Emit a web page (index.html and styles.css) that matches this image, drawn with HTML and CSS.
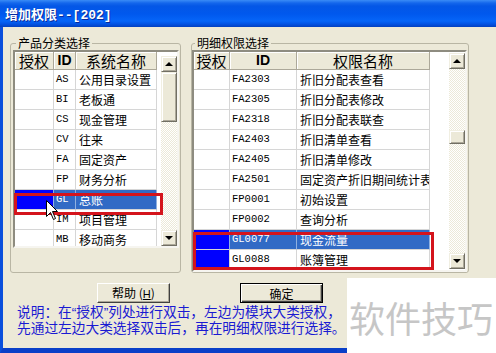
FILE: index.html
```html
<!DOCTYPE html>
<html lang="zh-CN">
<head>
    <meta charset="UTF-8">
    <title>增加权限</title>
    <link rel="stylesheet" href="styles.css">
</head>
<body>
    <div class="window">
        <div class="titlebar">增加权限<span class="title-num">--[202]</span></div>
        <div class="frame">
            <div class="groups">
                <fieldset class="group group-left">
                    <legend>产品分类选择</legend>
                    <div class="list list-left">
                        <div class="grid grid-left">
                            <div class="row head">
                                <div class="hd">授权</div>
                                <div class="hd hd-id">ID</div>
                                <div class="hd">系统名称</div>
                            </div>
                            <div class="row"><div class="cell"></div><div class="cell id">AS</div><div class="cell">公用目录设置</div></div>
                            <div class="row"><div class="cell"></div><div class="cell id">BI</div><div class="cell">老板通</div></div>
                            <div class="row"><div class="cell"></div><div class="cell id">CS</div><div class="cell">现金管理</div></div>
                            <div class="row"><div class="cell"></div><div class="cell id">CV</div><div class="cell">往来</div></div>
                            <div class="row"><div class="cell"></div><div class="cell id">FA</div><div class="cell">固定资产</div></div>
                            <div class="row"><div class="cell"></div><div class="cell id">FP</div><div class="cell">财务分析</div></div>
                            <div class="row sel"><div class="cell auth"></div><div class="cell id">GL</div><div class="cell">总账</div></div>
                            <div class="row"><div class="cell"></div><div class="cell id">IM</div><div class="cell">项目管理</div></div>
                            <div class="row"><div class="cell"></div><div class="cell id">MB</div><div class="cell">移动商务</div></div>
                        </div>
                        <div class="vscroll vscroll-left">
                            <div class="sb-btn"><span class="arrow-up"></span></div>
                            <div class="sb-track"><div class="sb-thumb thumb-left"></div></div>
                            <div class="sb-btn"><span class="arrow-down"></span></div>
                        </div>
                        <div class="mark mark-left"></div>
                        <svg class="cursor" width="13" height="21" viewBox="0 0 13 21">
                            <path d="M0.5 0.5 L0.5 16.5 L4.5 12.5 L7.5 19.5 L9.5 18.5 L6.5 11.5 L11.5 11.5 Z" fill="#fff" stroke="#000" stroke-width="1"/>
                        </svg>
                    </div>
                </fieldset>

                <fieldset class="group group-right">
                    <legend>明细权限选择</legend>
                    <div class="list list-right">
                        <div class="grid grid-right">
                            <div class="row head">
                                <div class="hd">授权</div>
                                <div class="hd hd-id">ID</div>
                                <div class="hd">权限名称</div>
                            </div>
                            <div class="row"><div class="cell"></div><div class="cell id">FA2303</div><div class="cell">折旧分配表查看</div></div>
                            <div class="row"><div class="cell"></div><div class="cell id">FA2305</div><div class="cell">折旧分配表修改</div></div>
                            <div class="row"><div class="cell"></div><div class="cell id">FA2318</div><div class="cell">折旧分配表联查</div></div>
                            <div class="row"><div class="cell"></div><div class="cell id">FA2403</div><div class="cell">折旧清单查看</div></div>
                            <div class="row"><div class="cell"></div><div class="cell id">FA2405</div><div class="cell">折旧清单修改</div></div>
                            <div class="row"><div class="cell"></div><div class="cell id">FA2501</div><div class="cell">固定资产折旧期间统计表</div></div>
                            <div class="row"><div class="cell"></div><div class="cell id">FP0001</div><div class="cell">初始设置</div></div>
                            <div class="row"><div class="cell"></div><div class="cell id">FP0002</div><div class="cell">查询分析</div></div>
                            <div class="row sel"><div class="cell auth"></div><div class="cell id">GL0077</div><div class="cell">现金流量</div></div>
                            <div class="row"><div class="cell auth"></div><div class="cell id">GL0088</div><div class="cell">账簿管理</div></div>
                        </div>
                        <div class="vscroll vscroll-right">
                            <div class="sb-btn"><span class="arrow-up"></span></div>
                            <div class="sb-track"><div class="sb-thumb thumb-right"></div></div>
                            <div class="sb-btn"><span class="arrow-down"></span></div>
                        </div>
                        <div class="mark mark-right"></div>
                    </div>
                </fieldset>
            </div>

            <div class="actions">
                <button class="btn btn-help">帮助 (<u>H</u>)</button>
                <button class="btn btn-ok">确定</button>
            </div>

            <p class="note">说明：在“授权”列处进行双击，左边为模块大类授权，<br>先通过左边大类选择双击后，再在明细权限进行选择。</p>
        </div>

        <div class="watermark">软件技巧</div>
    </div>
</body>
</html>
```

FILE: styles.css
```css
* {
    box-sizing: border-box;
}

body {
    margin: 0;
    width: 496px;
    height: 353px;
    overflow: hidden;
    background: #fff;
    font-family: "Noto Sans CJK SC", sans-serif;
    font-size: 12px;
    color: #000;
}

.window {
    position: relative;
    width: 496px;
    height: 353px;
}

.titlebar {
    height: 27px;
    padding-left: 5px;
    line-height: 27px;
    font-size: 13px;
    font-weight: bold;
    color: #fff;
    text-shadow: 1px 1px #0c2a9a;
    background: linear-gradient(to bottom, #3a8cf6 0, #1467ec 3px, #0457e6 6px, #0058ee 14px, #0565f8 21px, #0253e4 24px, #0340bf 27px);
}

.title-num {
    font-family: "Liberation Mono", monospace;
}

.frame {
    height: 326px;
    background: #ece9d8;
    border-left: 3px solid #0a4fdc;
    border-bottom: 5px solid #0a3fc8;
}

/* group boxes */
.groups {
    display: flex;
    align-items: flex-start;
    gap: 10px;
    padding: 9px 0 0 7px;
}

.group {
    margin: 0;
    min-width: 0;
    border: 1px solid #b9b6a4;
    border-radius: 3px;
}

.group-left {
    width: 171px;
    padding: 0 1px 24px 2px;
}

.group-right {
    width: 278px;
    padding: 0 1px 0 0;
}

.group legend {
    margin-left: 3px;
    padding: 0 2px;
    font-size: 12px;
    line-height: 14px;
}

/* list boxes */
.list {
    position: relative;
    display: flex;
    background: #fff;
    border: 2px solid;
    border-color: #8e8c80 #f6f5f0 #f6f5f0 #8e8c80;
}

.list-left {
    width: 166px;
    height: 198px;
}

.list-right {
    width: 275px;
    height: 222px;
}

.grid {
    overflow: hidden;
}

.grid-left {
    width: 142px;
}

.grid-right {
    width: 236px;
}

.row {
    display: grid;
    height: 20px;
}

.grid-left .row {
    grid-template-columns: 39px 22px 81px;
}

.grid-right .row {
    grid-template-columns: 36px 67px 133px;
}

.row.head {
    height: 18px;
}

.hd {
    background: #ece9d8;
    border-right: 1px solid #aca899;
    border-bottom: 1px solid #aca899;
    box-shadow: inset 1px 1px #fff;
    font-size: 15px;
    line-height: 17px;
    text-align: center;
    white-space: nowrap;
}

.hd-id {
    font-family: "Liberation Sans", sans-serif;
    font-size: 14px;
    font-weight: bold;
}

.cell {
    border-right: 1px solid #d6d6d6;
    border-bottom: 1px solid #d6d6d6;
    padding-left: 3px;
    line-height: 19px;
    white-space: nowrap;
    overflow: hidden;
}

.cell.id {
    font-family: "Liberation Mono", monospace;
    font-size: 10.5px;
    padding-left: 2px;
}

.cell.auth {
    background: #0000ff;
}

.row.sel .cell {
    background: #316ac5;
    color: #fff;
    border-right-color: #8fb0e0;
}

.row.sel .cell.auth {
    background: #0000ff;
}

/* scrollbars */
.vscroll {
    display: flex;
    flex-direction: column;
    width: 16px;
    margin-left: auto;
}

.vscroll-left {
    margin-top: 4px;
}

.vscroll-right {
    margin-top: 1px;
    margin-bottom: 1px;
}

.sb-btn,
.sb-thumb {
    position: relative;
    background: #ece9d8;
    border: 1px solid;
    border-color: #f1efe2 #716f64 #716f64 #f1efe2;
    box-shadow: inset 1px 1px #fff, inset -1px -1px #aca899;
}

.sb-btn {
    height: 16px;
    flex: none;
}

.sb-track {
    flex: 1;
    background: repeating-conic-gradient(#fff 0 25%, #ece9d8 0 50%) 0 0 / 2px 2px;
}

.thumb-left {
    height: 50px;
}

.thumb-right {
    margin-top: 61px;
    height: 14px;
}

.arrow-up,
.arrow-down {
    position: absolute;
    left: 3px;
    width: 0;
    height: 0;
    border-left: 4px solid transparent;
    border-right: 4px solid transparent;
}

.arrow-up {
    top: 5px;
    border-bottom: 4px solid #000;
}

.arrow-down {
    top: 5px;
    border-top: 4px solid #000;
}

/* red annotation boxes and pointer */
.mark {
    position: absolute;
    border: 3px solid #d4141c;
}

.mark-left {
    left: -1px;
    top: 141px;
    width: 149px;
    height: 22px;
}

.mark-right {
    left: -1px;
    top: 180px;
    width: 241px;
    height: 38px;
}

.cursor {
    position: absolute;
    left: 31px;
    top: 148px;
}

/* bottom */
.actions {
    display: flex;
    gap: 70px;
    padding: 10px 0 0 94px;
}

.btn {
    height: 20px;
    padding: 0;
    background: #ece9d8;
    border: 1px solid;
    border-color: #fff #404040 #404040 #fff;
    box-shadow: inset -1px -1px #aca899;
    font-family: "Noto Sans CJK SC", sans-serif;
    font-size: 12px;
    line-height: 17px;
    color: #000;
}

.btn u {
    font-family: "Liberation Sans", sans-serif;
    font-size: 11px;
}

.btn-help {
    width: 73px;
}

.btn-ok {
    width: 83px;
    border-color: #000;
    box-shadow: inset 1px 1px #fff, inset -1px -1px #404040, inset -2px -2px #aca899;
}

.note {
    margin: 2px 0 0 14px;
    font-family: "Liberation Sans", "Noto Sans CJK SC", sans-serif;
    font-size: 13.7px;
    line-height: 16px;
    color: #1a1ad2;
}

.watermark {
    position: absolute;
    left: 347px;
    top: 278px;
    right: 0;
    bottom: 0;
    padding: 19px 0 0 2px;
    background: #fff;
    color: #c6c6c6;
    font-size: 36px;
    line-height: 40px;
    white-space: nowrap;
}
```
